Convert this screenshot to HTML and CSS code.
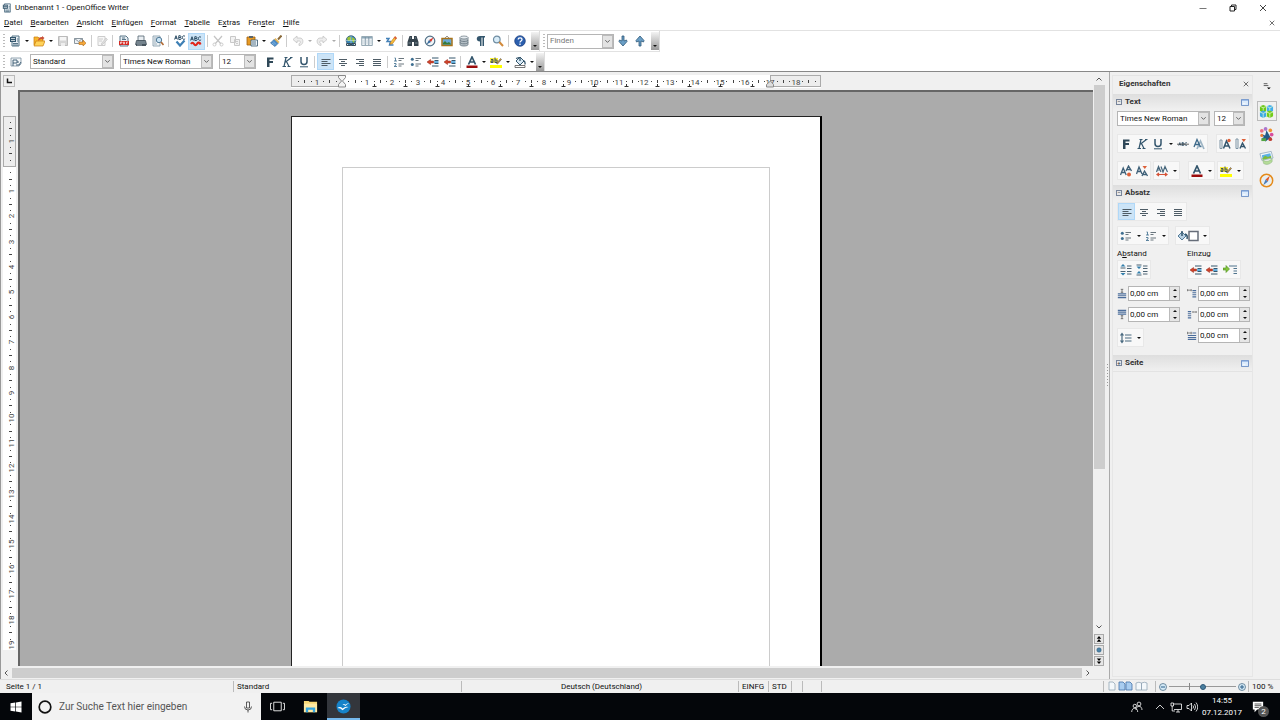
FILE: index.html
```html
<!DOCTYPE html>
<html lang="de">
<head>
  <meta charset="UTF-8" />
  <title>Unbenannt 1 - OpenOffice Writer</title>
  <link rel="stylesheet" href="styles.css">
</head>
<body>
  <svg class="sprite" aria-hidden="true">
    <symbol id="doc" viewBox="0 0 12 12"><path d="M3 1h7v10H3z" fill="#e9f0f5" stroke="#557487"/><path d="M1 2h6v5H1z" fill="#34566d"/><path d="M2 3.500h4M2 5.500h4" stroke="#fff" stroke-width=".7"/><path d="M4 8.500h5M4 10h5M8 4h1.500M8 6h1.500" stroke="#34566d" stroke-width=".8"/></symbol>
    <symbol id="open" viewBox="0 0 12 12"><path d="M1 10V2h4l1 1h4v3" fill="#f7b52d" stroke="#c97b0b" stroke-width=".7"/><path d="M1 11l2-5h9l-2 5z" fill="#ffd35a" stroke="#c97b0b" stroke-width=".7"/><path d="M5 6c0-3 2-4 4-4V1l2.500 2L9 5V4C7 4 6 5 5 6z" fill="#c8503a"/></symbol>
    <symbol id="save" viewBox="0 0 12 12"><path d="M1.500 1.500h9v9h-9z" fill="#d5d5d5" stroke="#bbb"/><path d="M3 2h6v3.500H3z" fill="#f6f6f6"/><path d="M4 8h4v3H4z" fill="#eee"/></symbol>
    <symbol id="mail" viewBox="0 0 12 12"><path d="M.5 3.500h8v5h-8z" fill="#eef2f5" stroke="#8a969f"/><path d="M.5 3.500l4 3 4-3" fill="none" stroke="#8a969f"/><path d="M5 7h4V5l3 3.200L9 11V9.500H5z" fill="#f6a93b" stroke="#b06a15" stroke-width=".6"/></symbol>
    <symbol id="edit" viewBox="0 0 12 12"><path d="M2 1.500h7v9H2z" fill="#f7f7f7" stroke="#ccc"/><path d="M3 4h4M3 6h3" stroke="#ccc"/><path d="M5 9l5-6 1.500 1.500L6 10z" fill="#ddd" stroke="#bbb" stroke-width=".5"/></symbol>
    <symbol id="pdf" viewBox="0 0 12 12"><path d="M2 1h6l2 2v8H2z" fill="#e7eef3" stroke="#5b7688"/><path d="M1 6h10v4H1z" fill="#d52a24"/><path d="M2.500 9V7h1.500v1h-1.500M5.500 7v2h1V7zM8.500 9V7H10M8.500 8h1" fill="none" stroke="#fff" stroke-width=".6"/><path d="M4 3h3M4 4.500h4" stroke="#34566d" stroke-width=".8"/></symbol>
    <symbol id="print" viewBox="0 0 12 12"><path d="M3 1h6v5H3z" fill="#e8edf1" stroke="#51636f" stroke-width=".8"/><path d="M1.500 5.500h9l1 4H.5z" fill="#75848e" stroke="#34424c" stroke-width=".7"/><path d="M1 9h10v2H1z" fill="#46545e"/><path d="M2 10h5" stroke="#d9e3ea" stroke-width=".6"/></symbol>
    <symbol id="preview" viewBox="0 0 12 12"><path d="M1 1h7v10H1z" fill="#eef3f6" stroke="#7c94a4" stroke-width=".8"/><path d="M2 3h3M2 5h2M2 7h2M2 9h3" stroke="#7c94a4" stroke-width=".7"/><circle cx="7" cy="5" r="2.700" fill="#c9e4f5" stroke="#537b98"/><path d="M9 7l2.500 3" stroke="#b06a35" stroke-width="1.600"/></symbol>
    <symbol id="letters" viewBox="0 0 12 5"><path d="M.6 4.500L2 .7l1.400 3.800M1 3.200h2M4.800.700v3.800h1.400c1.500 0 1.400-2 0-2H4.800h1.200c1.300 0 1.300-1.800 0-1.800zM11 1.300c-1.300-1.200-2.600-.3-2.600 1.200 0 1.800 1.500 2.500 2.700 1.300" fill="none" stroke="#2d4e66" stroke-width="1"/></symbol>
    <symbol id="spell" viewBox="0 0 12 12"><use href="#letters" x="0" y="0" width="12" height="5"/><path d="M2.500 6.500L6 10.500 10.500 5.500" fill="none" stroke="#3d7fb4" stroke-width="2.200"/></symbol>
    <symbol id="autospell" viewBox="0 0 12 12"><use href="#letters" x="0" y="1" width="12" height="5"/><path d="M1 9q1.500-2.500 3 0t3 0 3-.5l1-.5" fill="none" stroke="#e1261c" stroke-width="2.200"/></symbol>
    <symbol id="cut" viewBox="0 0 12 12"><path d="M2 1l7 8M10 1L3 9" stroke="#c4c4c4" stroke-width="1.200"/><circle cx="2.500" cy="9.500" r="1.500" fill="none" stroke="#ccc"/><circle cx="9.500" cy="9.500" r="1.500" fill="none" stroke="#ccc"/></symbol>
    <symbol id="copy" viewBox="0 0 12 12"><path d="M1.500 1.500h5v6h-5zM5.500 4.500h5v6h-5z" fill="#f2f2f2" stroke="#c8c8c8"/><path d="M7 6.500h2M7 8.500h2" stroke="#ccc"/></symbol>
    <symbol id="paste" viewBox="0 0 12 12"><path d="M1 2h8v8H1z" fill="#e79a24" stroke="#a15f0c" stroke-width=".8"/><path d="M3 1h4v2H3z" fill="#59646c"/><path d="M5 5h6.500v6H5z" fill="#eef5fa" stroke="#34566d" stroke-width=".8"/><path d="M6 7h4M6 9h4" stroke="#34566d" stroke-width=".8"/></symbol>
    <symbol id="brush" viewBox="0 0 12 12"><path d="M11.500.500L8 4.500" stroke="#8a6a3a" stroke-width="2"/><path d="M5.500 3L9.500 7 8 8.500 4 4.500z" fill="#e7b75a"/><path d="M4 4.500L8 8.500 5 11.500.500 8z" fill="#4a8bc9" stroke="#28608f" stroke-width=".6"/><path d="M2 8l2.500 2M3 6.500L6 9.500" stroke="#aad0ee" stroke-width=".6"/></symbol>
    <symbol id="undo" viewBox="0 0 12 12"><path d="M1 4.500L5 1v2h3c4 0 4 7-1 7.500V8.500c2-.5 2-2.500 0-2.500H5v2z" fill="#ededed" stroke="#c4c4c4" stroke-width=".8"/></symbol>
    <symbol id="globe" viewBox="0 0 12 12"><circle cx="6" cy="5.500" r="4.800" fill="#3b86b5" stroke="#28526d" stroke-width=".7"/><path d="M2 3q3-3 4 0T3 6zM7 2l3 2-1 4-2-2z" fill="#9bc33b"/><path d="M1 5.500h10M6 1v9" stroke="#d9edf5" stroke-width=".5"/><path d="M1.500 8.500h4v2h-4zM6.500 8.500h4v2h-4z" fill="none" stroke="#364b59" stroke-width="1"/></symbol>
    <symbol id="table" viewBox="0 0 12 12"><path d="M.7 1.500h10.600v9H.7z" fill="#edf2f5" stroke="#7f95a3" stroke-width=".8"/><path d="M1 2h10v1.500H1z" fill="#8fa9b9"/><path d="M4.300 2v8M7.800 2v8" stroke="#7890a0" stroke-width=".9"/><path d="M1 6h10M1 8h10" stroke="#b9c7d0" stroke-width=".6"/></symbol>
    <symbol id="draw" viewBox="0 0 12 12"><path d="M1 3.500h3l-2 3h3.500l-1 3.500h4" fill="none" stroke="#4381b8" stroke-width="1.400"/><path d="M5.500 7.500L10 1.500l1.700 1.500L7.500 8.700l-2.500.5z" fill="#f6bd3c" stroke="#b76d16" stroke-width=".6"/><path d="M10 1.500l1.700 1.500-.9 1.200L9 2.700z" fill="#de5143"/></symbol>
    <symbol id="find" viewBox="0 0 12 12"><path d="M2.500 1h2.500v3h2V1h2.500l2 6v4H7V7H5v4H.5V7z" fill="#36444e"/><path d="M1.500 8h2.500M8 8h2.500M3 3h1M8 3h1" stroke="#98a9b5" stroke-width=".7"/></symbol>
    <symbol id="compass" viewBox="0 0 12 12"><circle cx="6" cy="6" r="4.800" fill="#f1f6f9" stroke="#527087" stroke-width="1.200"/><path d="M9.500 2.500L7 7 5 5z" fill="#da3226"/><path d="M2.500 9.500L5 5l2 2z" fill="#35699c"/></symbol>
    <symbol id="gallery" viewBox="0 0 12 12"><path d="M4 3l2-2 2 2" fill="none" stroke="#666" stroke-width=".7"/><path d="M1 3.500h10v7H1z" fill="#68a9d8" stroke="#a8741c" stroke-width="1.500"/><path d="M2 9.500V8l2-2 2 2 2-1 2 2v.500z" fill="#387b38"/></symbol>
    <symbol id="database" viewBox="0 0 12 12"><path d="M2 2.500v7c0 2 8 2 8 0v-7" fill="#b4bec5" stroke="#65747e" stroke-width=".8"/><ellipse cx="6" cy="2.500" rx="4" ry="1.500" fill="#e6ecf0" stroke="#65747e" stroke-width=".7"/><path d="M2 5c0 2 8 2 8 0M2 7.300c0 2 8 2 8 0" fill="none" stroke="#65747e" stroke-width=".8"/></symbol>
    <symbol id="pilcrow" viewBox="0 0 12 12"><path d="M10 1H5C.700 1 .700 6.500 5 6.500V11h1.500V2.500h1V11H9V2.500h1z" fill="#34566d"/></symbol>
    <symbol id="loupe" viewBox="0 0 12 12"><circle cx="4.800" cy="4.500" r="3.300" fill="#d8ecf8" stroke="#6f8da2" stroke-width="1.200"/><path d="M7.300 7l3.700 4" stroke="#d28a3b" stroke-width="2"/></symbol>
    <symbol id="help" viewBox="0 0 12 12"><circle cx="6" cy="6" r="5.300" fill="#2b5fae" stroke="#18397a" stroke-width=".7"/><path d="M4.200 4.600c0-2.400 3.800-2.400 3.800 0C8 6 6 6 6 7.500M6 8.500V10" fill="none" stroke="#fff" stroke-width="1.300"/></symbol>
    <symbol id="down" viewBox="0 0 12 12"><path d="M5 1h2v5l2.500-1 .5 1.500-4 4.500-4-4.500.500-1.500L5 6z" fill="#6b9fc6" stroke="#2d5878" stroke-width=".8"/></symbol>
    <symbol id="styles" viewBox="0 0 12 12"><path d="M1 2h10v6l-2 2H1z" fill="#f3f6f8" stroke="#7890a0" stroke-width=".8"/><path d="M3 7V4h4v3H3v3M7 6h2M6 9h3l2-3" fill="none" stroke="#34566d" stroke-width=".9"/></symbol>
    <symbol id="bold" viewBox="0 0 12 12"><path d="M3 1.500h6.500v2h-4v1.500H9v2H5.500V11H3z" fill="#2f4858"/></symbol>
    <symbol id="italic" viewBox="0 0 12 12"><path d="M5 1.500L3 10.500M1.500 10.500h3.500M3.500 1.500h3M10.500 1.500L4.500 6M9 1.500h2.500M5.500 5.500L8 10.500M6.500 10.500h3" fill="none" stroke="#34566d" stroke-width="1.200"/></symbol>
    <symbol id="underline" viewBox="0 0 12 12"><path d="M3 1v4.500c0 4 6 4 6 0V1" fill="none" stroke="#34566d" stroke-width="1.500"/><path d="M2 10.800h8" stroke="#34566d"/></symbol>
    <symbol id="strike" viewBox="0 0 12 12"><use href="#letters" x="1" y="4" width="10" height="4"/><path d="M0 6.200h12" stroke="#444" stroke-width=".8"/></symbol>
    <symbol id="shadow" viewBox="0 0 12 12"><path d="M4 11l3.500-8L11 11M5 8.500h4" fill="none" stroke="#9db4c4" stroke-width="1.700"/><path d="M1 9l3-7.500L7.500 9M2 6.500h4" fill="none" stroke="#3e6a8a" stroke-width="1.300"/></symbol>
    <symbol id="left" viewBox="0 0 12 12"><path d="M1.500 3.500h9M1.500 5.500h6M1.500 7.500h9M1.500 9.500h6" stroke="#4e5c66"/></symbol>
    <symbol id="center" viewBox="0 0 12 12"><path d="M2 3.500h8M4 5.500h4M2 7.500h8M4 9.500h4" stroke="#4e5c66"/></symbol>
    <symbol id="right" viewBox="0 0 12 12"><path d="M2 3.500h8M5 5.500h5M2 7.500h8M5 9.500h5" stroke="#4e5c66"/></symbol>
    <symbol id="justify" viewBox="0 0 12 12"><path d="M2 3.500h8M2 5.500h8M2 7.500h8M2 9.500h8" stroke="#4e5c66"/></symbol>
    <symbol id="numbers" viewBox="0 0 12 12"><path d="M1.500 2h1v3M1 5h3M1 7.500h2v1.500L1 10.500h3" fill="none" stroke="#4d7896" stroke-width=".9"/><path d="M5.500 2.500h5.500M5.500 4.500h3M5.500 8h5.500M5.500 10h3" stroke="#59666f" stroke-width=".9"/></symbol>
    <symbol id="bullets" viewBox="0 0 12 12"><circle cx="2.300" cy="3.200" r="1.500" fill="#3f6f91"/><circle cx="2.300" cy="8.500" r="1.500" fill="#3f6f91"/><path d="M5.500 2.500h5.500M5.500 4.500h3M5.500 8h5.500M5.500 10h3" stroke="#59666f" stroke-width=".9"/></symbol>
    <symbol id="outdent" viewBox="0 0 12 12"><path d="M5 2h6.500M7.500 4.500h4M7.500 7.500h4M5 10h6.500" stroke="#34566d"/><path d="M7 5.200h4.500v1.700H7z" fill="#4fa3d8"/><path d="M0 6l3.500-2.500v1.500h3v2h-3v1.500z" fill="#d0432b" stroke="#942616" stroke-width=".5"/></symbol>
    <symbol id="fontcolor" viewBox="0 0 12 12"><path d="M2.500 8.500L6 1l3.500 7.500M4 6h4" fill="none" stroke="#34566d" stroke-width="1.700"/><path d="M.5 9.500h11V12H.5z" fill="#9b0d0d"/></symbol>
    <symbol id="highlight" viewBox="0 0 12 12"><path d="M0 9h12v3H0z" fill="#ff0"/><path d="M0 2h8v5H0z" fill="#f9ee3d"/><path d="M1 3.500h2v3H1V5h2M5 1.500V6.500h2V4H5" fill="none" stroke="#46545c" stroke-width="1"/><path d="M6.500 7.500l4-5 1 .9-4 4.600z" fill="#d39b37" stroke="#555" stroke-width=".6"/></symbol>
    <symbol id="fill" viewBox="0 0 12 12"><path d="M2 5l4-4 4 4-4 4z" fill="#d6e8f4" stroke="#34566d"/><path d="M6 1v4M2 2.500l3-1M9.500 4.500q2 1 1.500 4" fill="none" stroke="#34566d" stroke-width="1.300"/><path d="M1 9.500h10v2H1z" fill="#fff" stroke="#555" stroke-width=".8"/></symbol>
    <symbol id="grow" viewBox="0 0 12 12"><path d="M.5 10l2.700-7 3 7M1.500 7.500h3.500M6 6l2.500-5L11.500 6M7 4.500h3.500" fill="none" stroke="#3e6078" stroke-width="1.300"/><circle cx="9" cy="9.500" r="2" fill="#dc6039"/></symbol>
    <symbol id="shrink" viewBox="0 0 12 12"><path d="M.5 9L3 2l3 7M1.500 6.500h3.500M6 11l2.500-5 3 5M7 9.500h3.500" fill="none" stroke="#3e6078" stroke-width="1.300"/><path d="M6.500 1H11L8.800 4z" fill="#dc6039"/></symbol>
    <symbol id="sizeup" viewBox="0 0 12 12"><path d="M1 2v8.500h2V2z" fill="none" stroke="#7c93a3"/><path d="M4.500 10.500L7.500 3l3.500 7.500M5.500 8h4" fill="none" stroke="#34566d" stroke-width="1.500"/><circle cx="10" cy="2.500" r="1.700" fill="#dc6039"/></symbol>
    <symbol id="sizedown" viewBox="0 0 12 12"><path d="M1 1v9.500h2V1z" fill="none" stroke="#7c93a3"/><path d="M5 10.500L7.500 5l3 5.500M6 8.500h3" fill="none" stroke="#34566d" stroke-width="1.400"/><path d="M6.500 1h4.500L8.800 4z" fill="#dc6039"/></symbol>
    <symbol id="spacing" viewBox="0 0 12 12"><path d="M.5 7L2.500 1.500 5 7M1.500 5h2.500M5 1.500L7 7l2-5.500L11.500 7" fill="none" stroke="#46667b" stroke-width="1.200"/><path d="M1 9.500h10M3 8l-2 1.500L3 11M9 8l2 1.500L9 11" fill="none" stroke="#d65338" stroke-width="1.200"/></symbol>
    <symbol id="bucket" viewBox="0 0 22 12"><path d="M1 6l4-4 4 4-4 4z" fill="#b7d0e3" stroke="#537b98"/><path d="M5 1v5M8 4q3 1 2 5" fill="none" stroke="#34566d" stroke-width="1.500"/><path d="M12 1.500h9v9h-9z" fill="#fff" stroke="#666d79" stroke-width="1.500"/></symbol>
    <symbol id="paraup" viewBox="0 0 12 12"><path d="M3 0l2.500 2.500h-5zM3 11.500L.5 9h5z" fill="#3480ad"/><path d="M.5 4h5M.5 7.500h5M7 2h4.500M7 4.500h4.500M7 7.500h4.500M7 10h4.500" stroke="#4c6373" stroke-width="1.200"/></symbol>
    <symbol id="paradown" viewBox="0 0 12 12"><path d="M3 5L.5 2.500h5zM3 7l2.500 2.500h-5z" fill="#3480ad"/><path d="M.5 1h5M.5 11h5M7 2h4.500M7 4.500h4.500M7 7.500h4.500M7 10h4.500" stroke="#4c6373" stroke-width="1.200"/></symbol>
    <symbol id="hanging" viewBox="0 0 14 12"><path d="M0 4h3V1.500L6.500 5 3 8.500V6H0z" fill="#83c43c" stroke="#4c8f1d" stroke-width=".6"/><path d="M6 2h8M10.500 4.500H14M10.500 7H14M10.500 9.500H14" stroke="#50748d" stroke-width="1.200"/></symbol>
    <symbol id="above" viewBox="0 0 12 12"><path d="M1 6.500h10M1 8.700h10M1 11h10" stroke="#4b6d9b" stroke-width="1.400"/><path d="M6 1v4M4.500 1h3M4.500 4.500h3" stroke="#555" stroke-width=".9"/></symbol>
    <symbol id="below" viewBox="0 0 12 12"><path d="M1 1h10M1 3.200h10M1 5.500h10" stroke="#4b6d9b" stroke-width="1.400"/><path d="M6 7v4M4.500 7.500h3M4.500 11h3" stroke="#555" stroke-width=".9"/></symbol>
    <symbol id="before" viewBox="0 0 12 12"><path d="M6.500 2.500H11M6.500 5H11M6.500 7.500H11M6.500 10H11" stroke="#4b6d9b" stroke-width="1.300"/><path d="M.5 2h5M.7.800v2.500M5 .800v2.500" stroke="#555" stroke-width=".8"/></symbol>
    <symbol id="after" viewBox="0 0 12 12"><path d="M1 2.500h4M1 5h4M1 7.500h4M1 10h4" stroke="#4b6d9b" stroke-width="1.300"/><path d="M7 3h4.500M7 2v2M11 2v2" stroke="#555" stroke-width=".8"/></symbol>
    <symbol id="firstline" viewBox="0 0 12 12"><path d="M6.500 3H11M1 6h10M1 8.300h10M1 10.600h10" stroke="#4b6d9b" stroke-width="1.300"/><path d="M.5 3h5M.7 1.500v3M5 1.500v3" stroke="#555" stroke-width=".8"/></symbol>
    <symbol id="linespace" viewBox="0 0 12 12"><path d="M2 2v8M.5 3.500L2 1.500l1.500 2M.5 8.500l1.500 2 1.500-2M5 3h6.500M5 6h6.500M5 9h6.500" fill="none" stroke="#4a6a80" stroke-width="1.200"/></symbol>
    <symbol id="more" viewBox="0 0 9 8"><path d="M.5.500h8v7h-8z" fill="#dcebfb" stroke="#6488c2"/><path d="M1 1.500h7" stroke="#8aaee2"/><path d="M2 5.500h3" stroke="#fff"/></symbol>
    <symbol id="chevron" viewBox="0 0 8 8"><path d="M1.500 2.500L4 5l2.500-2.500" fill="none" stroke="#555"/></symbol>
    <symbol id="close" viewBox="0 0 8 8"><path d="M1 1l6 6M7 1L1 7" stroke="#444" stroke-width="1"/></symbol>
    <symbol id="cubes" viewBox="0 0 16 16"><path d="M8 2.500l3.500-1.500L15 2.500v5L11.500 9 8 7.500z" fill="#42aee9"/><path d="M1 2.500L4.500 1 8 2.500v5L4.500 9 1 7.500z" fill="#6bc817"/><path d="M1 8.500L4.500 7 8 8.500v4.500l-3.500 2L1 13z" fill="#3ba9e4"/><path d="M8 8.500L11.500 7 15 8.500V13l-3.500 2L8 13z" fill="#72cb19"/><path d="M1 2.500L4.500 4 8 2.500 11.500 4 15 2.500M1 8.500L4.500 10 8 8.500l3.500 1.500L15 8.500M4.500 4v3M11.500 4v3M4.500 10v5M11.500 10v5M8 2.500V13" fill="none" stroke="#e1f7d5" stroke-width=".8"/></symbol>
    <symbol id="gallerytab" viewBox="0 0 16 16"><circle cx="3" cy="4" r="2" fill="#ea6f87"/><circle cx="7" cy="2" r="2" fill="#ac76cc"/><circle cx="12" cy="3.500" r="2" fill="#f09431"/><circle cx="13.500" cy="8" r="2" fill="#d84d9d"/><circle cx="3" cy="9" r="1.700" fill="#ed7f33"/><path d="M8 3.500l6 10.500-4-1-3 2.500L3 12l2-1-1-3 2.500 1z" fill="#235a86"/><circle cx="12" cy="13" r="2" fill="#bf3d31"/><path d="M2.500 12h5v3h-5z" fill="#53a443"/></symbol>
    <symbol id="layers" viewBox="0 0 16 16"><path d="M1 4l12-2.500 2 7L3 11z" fill="#f2f7fb" stroke="#8ba6b9" stroke-width=".8"/><path d="M3 5.500l9-2 1 4.500-9 2z" fill="#5ab0e5"/><path d="M3.500 9l3-3 3 1.500 3.500-1.500v2.500l-9 2z" fill="#7dbb3b"/><path d="M4 11q6 3 10-2v3.500q-4 4.500-9 2z" fill="#b5dc97" stroke="#8fb684" stroke-width=".6"/></symbol>
    <symbol id="navtab" viewBox="0 0 16 16"><circle cx="8" cy="8" r="6.600" fill="#f6f1e3" stroke="#e38a1c" stroke-width="1.600"/><circle cx="8" cy="8" r="4.800" fill="#e2edf6"/><path d="M11.500 3L9.500 9 7 7z" fill="#e05a2b"/><path d="M4.500 13l2.500-6 2.500 2z" fill="#4a7db6"/></symbol>
    <symbol id="person" viewBox="0 0 12 12"><circle cx="8" cy="3" r="1.900"/><path d="M5 9c0-5 6-5 6 0"/><circle cx="3.800" cy="5" r="1.700"/><path d="M.7 11c0-5 6-5 6 0"/></symbol>
  </svg>

  <div class="app">
    <header class="titlebar">
      <svg class="icon"><use href="#doc"/></svg>
      <h1>Unbenannt 1 - OpenOffice Writer</h1>
      <button class="win" aria-label="Minimieren"><svg viewBox="0 0 8 8"><path d="M.5 4.500h7" stroke="#777"/></svg></button>
      <button class="win" aria-label="Verkleinern"><svg viewBox="0 0 8 8"><path d="M1 2.500h4.500V7H1zM2.500 2.500V1h4.500v4.500H5.500" fill="none" stroke="#222"/></svg></button>
      <button class="win" aria-label="Schließen"><svg><use href="#close"/></svg></button>
    </header>

    <nav class="menubar">
      <button><u>D</u>atei</button>
      <button><u>B</u>earbeiten</button>
      <button><u>A</u>nsicht</button>
      <button><u>E</u>infügen</button>
      <button><u>F</u>ormat</button>
      <button><u>T</u>abelle</button>
      <button>E<u>x</u>tras</button>
      <button>Fen<u>s</u>ter</button>
      <button><u>H</u>ilfe</button>
      <button class="doc-close" aria-label="Dokument schließen"><svg><use href="#close"/></svg></button>
    </nav>

    <div class="toolrow">
      <div class="toolbar standard">
        <i class="grip"></i>
        <button class="tool" aria-label="Neu"><svg><use href="#doc"/></svg></button><button class="arrow" aria-label="Neu Auswahl"></button>
        <button class="tool" aria-label="Öffnen"><svg><use href="#open"/></svg></button><button class="arrow" aria-label="Zuletzt benutzt"></button>
        <button class="tool" aria-label="Speichern"><svg><use href="#save"/></svg></button>
        <button class="tool" aria-label="E-Mail"><svg><use href="#mail"/></svg></button>
        <i class="sep"></i>
        <button class="tool" aria-label="Bearbeiten"><svg><use href="#edit"/></svg></button>
        <i class="sep"></i>
        <button class="tool" aria-label="PDF"><svg><use href="#pdf"/></svg></button>
        <button class="tool" aria-label="Drucken"><svg><use href="#print"/></svg></button>
        <button class="tool" aria-label="Seitenansicht"><svg><use href="#preview"/></svg></button>
        <i class="sep"></i>
        <button class="tool" aria-label="Rechtschreibung"><svg><use href="#spell"/></svg></button>
        <button class="tool on" aria-label="Automatische Prüfung"><svg><use href="#autospell"/></svg></button>
        <i class="sep"></i>
        <button class="tool" aria-label="Ausschneiden"><svg><use href="#cut"/></svg></button>
        <button class="tool" aria-label="Kopieren"><svg><use href="#copy"/></svg></button>
        <button class="tool" aria-label="Einfügen"><svg><use href="#paste"/></svg></button><button class="arrow" aria-label="Einfügen als"></button>
        <button class="tool" aria-label="Format übertragen"><svg><use href="#brush"/></svg></button>
        <i class="sep"></i>
        <button class="tool" aria-label="Rückgängig"><svg><use href="#undo"/></svg></button><button class="arrow off" aria-label="Rückgängig Liste"></button>
        <button class="tool flip" aria-label="Wiederherstellen"><svg><use href="#undo"/></svg></button><button class="arrow off" aria-label="Wiederherstellen Liste"></button>
        <i class="sep"></i>
        <button class="tool" aria-label="Hyperlink"><svg><use href="#globe"/></svg></button>
        <button class="tool" aria-label="Tabelle"><svg><use href="#table"/></svg></button><button class="arrow" aria-label="Tabellengröße"></button>
        <button class="tool" aria-label="Zeichnen"><svg><use href="#draw"/></svg></button>
        <i class="sep"></i>
        <button class="tool" aria-label="Suchen"><svg><use href="#find"/></svg></button>
        <button class="tool" aria-label="Navigator"><svg><use href="#compass"/></svg></button>
        <button class="tool" aria-label="Gallery"><svg><use href="#gallery"/></svg></button>
        <button class="tool" aria-label="Datenquellen"><svg><use href="#database"/></svg></button>
        <button class="tool" aria-label="Steuerzeichen"><svg><use href="#pilcrow"/></svg></button>
        <button class="tool" aria-label="Maßstab"><svg><use href="#loupe"/></svg></button>
        <i class="sep"></i>
        <button class="tool" aria-label="Hilfe"><svg><use href="#help"/></svg></button>
        <button class="end" aria-label="Weitere"></button>
      </div>
      <div class="toolbar search">
        <i class="grip"></i>
        <span class="combo find"><input type="text" placeholder="Finden" aria-label="Finden"><svg><use href="#chevron"/></svg></span>
        <button class="tool" aria-label="Weitersuchen"><svg><use href="#down"/></svg></button>
        <button class="tool flip-y" aria-label="Rückwärts suchen"><svg><use href="#down"/></svg></button>
        <button class="end" aria-label="Weitere"></button>
      </div>
    </div>

    <div class="toolrow">
      <div class="toolbar format">
        <i class="grip"></i>
        <button class="tool" aria-label="Formatvorlagen"><svg><use href="#styles"/></svg></button>
        <span class="combo style"><select aria-label="Vorlage"><option>Standard</option></select><svg><use href="#chevron"/></svg></span>
        <span class="combo font"><select aria-label="Schriftart"><option>Times New Roman</option></select><svg><use href="#chevron"/></svg></span>
        <span class="combo size"><select aria-label="Schriftgröße"><option>12</option></select><svg><use href="#chevron"/></svg></span>
        <button class="tool" aria-label="Fett"><svg><use href="#bold"/></svg></button>
        <button class="tool" aria-label="Kursiv"><svg><use href="#italic"/></svg></button>
        <button class="tool" aria-label="Unterstrichen"><svg><use href="#underline"/></svg></button>
        <i class="sep"></i>
        <button class="tool on" aria-label="Linksbündig"><svg><use href="#left"/></svg></button>
        <button class="tool" aria-label="Zentriert"><svg><use href="#center"/></svg></button>
        <button class="tool" aria-label="Rechtsbündig"><svg><use href="#right"/></svg></button>
        <button class="tool" aria-label="Blocksatz"><svg><use href="#justify"/></svg></button>
        <i class="sep"></i>
        <button class="tool" aria-label="Nummerierung"><svg><use href="#numbers"/></svg></button>
        <button class="tool" aria-label="Aufzählung"><svg><use href="#bullets"/></svg></button>
        <button class="tool" aria-label="Einzug verringern"><svg><use href="#outdent"/></svg></button>
        <button class="tool" aria-label="Einzug erhöhen"><svg><use href="#outdent"/></svg></button>
        <i class="sep"></i>
        <button class="tool" aria-label="Schriftfarbe"><svg><use href="#fontcolor"/></svg></button><button class="arrow" aria-label="Schriftfarbe wählen"></button>
        <button class="tool" aria-label="Hervorheben"><svg><use href="#highlight"/></svg></button><button class="arrow" aria-label="Hervorhebung wählen"></button>
        <button class="tool" aria-label="Hintergrund"><svg><use href="#fill"/></svg></button><button class="arrow" aria-label="Hintergrund wählen"></button>
        <button class="end" aria-label="Weitere"></button>
      </div>
    </div>

    <main class="work">
      <section class="editor">
        <div class="hruler">
          <button class="tabstop" aria-label="Tabulator"><svg viewBox="0 0 10 10"><path d="M3.500 2.500v4H8" fill="none" stroke="#111" stroke-width="1.500"/></svg></button>
          <div class="htrack"><svg id="hscale" width="530" height="14"></svg></div>
        </div>
        <div class="vruler"><svg id="vscale" width="13" height="534"></svg></div>
        <div class="canvas">
          <div class="page"><div class="textarea" contenteditable="true" spellcheck="false" aria-label="Text"></div></div>
        </div>
        <div class="vscroll">
          <svg><use href="#chevron" transform="rotate(180 4 4)"/></svg>
          <div class="vthumb"></div>
          <svg class="push"><use href="#chevron"/></svg>
          <button aria-label="Vorherige Seite"><svg viewBox="0 0 8 8"><path d="M4 0l3 3.500H1zM4 4l3 3.500H1z"/></svg></button>
          <button aria-label="Navigation"><svg viewBox="0 0 8 8"><circle cx="4" cy="4" r="3" fill="#4b82a6" stroke="#2d5878" stroke-width=".6"/></svg></button>
          <button aria-label="Nächste Seite"><svg viewBox="0 0 8 8"><path d="M4 4L1 .5h6zM4 8L1 4.500h6z"/></svg></button>
        </div>
        <div class="hscroll">
          <svg><use href="#chevron" transform="rotate(90 4 4)"/></svg>
          <div class="hthumb"></div>
          <svg><use href="#chevron" transform="rotate(-90 4 4)"/></svg>
        </div>
      </section>

      <div class="splitter"></div>

      <aside class="sidebar">
        <div class="deck">
          <div class="deck-title"><h2>Eigenschaften</h2><button aria-label="Seitenleiste schließen"><svg><use href="#close"/></svg></button></div>

          <div class="head"><span class="box">−</span><h3>Text</h3><button aria-label="Zeichen"><svg><use href="#more"/></svg></button></div>
          <div class="panel text-panel">
            <div class="row fonts">
              <span class="combo font"><select aria-label="Schriftart"><option>Times New Roman</option></select><svg><use href="#chevron"/></svg></span>
              <span class="combo size"><select aria-label="Schriftgröße"><option>12</option></select><svg><use href="#chevron"/></svg></span>
            </div>
            <div class="row apart">
              <div class="group">
                <button class="tool" aria-label="Fett"><svg><use href="#bold"/></svg></button>
                <button class="tool" aria-label="Kursiv"><svg><use href="#italic"/></svg></button>
                <button class="tool" aria-label="Unterstrichen"><svg><use href="#underline"/></svg></button><button class="arrow" aria-label="Unterstreichung"></button>
                <button class="tool" aria-label="Durchgestrichen"><svg><use href="#strike"/></svg></button>
                <button class="tool" aria-label="Schatten"><svg><use href="#shadow"/></svg></button>
              </div>
              <div class="group">
                <button class="tool" aria-label="Vergrößern"><svg><use href="#sizeup"/></svg></button>
                <button class="tool" aria-label="Verkleinern"><svg><use href="#sizedown"/></svg></button>
              </div>
            </div>
            <div class="row marks">
              <div class="group">
                <button class="tool" aria-label="Hochgestellt"><svg><use href="#grow"/></svg></button>
                <button class="tool" aria-label="Tiefgestellt"><svg><use href="#shrink"/></svg></button>
              </div>
              <div class="group">
                <button class="tool" aria-label="Zeichenabstand"><svg><use href="#spacing"/></svg></button><button class="arrow" aria-label="Abstand wählen"></button>
              </div>
              <div class="group color">
                <button class="tool" aria-label="Schriftfarbe"><svg><use href="#fontcolor"/></svg></button><button class="arrow" aria-label="Farbe wählen"></button>
              </div>
              <div class="group">
                <button class="tool" aria-label="Hervorheben"><svg><use href="#highlight"/></svg></button><button class="arrow" aria-label="Hervorhebung wählen"></button>
              </div>
            </div>
          </div>

          <div class="head"><span class="box">−</span><h3>Absatz</h3><button aria-label="Absatz"><svg><use href="#more"/></svg></button></div>
          <div class="panel para-panel">
            <div class="row">
              <div class="group align">
                <button class="tool on" aria-label="Linksbündig"><svg><use href="#left"/></svg></button>
                <button class="tool" aria-label="Zentriert"><svg><use href="#center"/></svg></button>
                <button class="tool" aria-label="Rechtsbündig"><svg><use href="#right"/></svg></button>
                <button class="tool" aria-label="Blocksatz"><svg><use href="#justify"/></svg></button>
              </div>
            </div>
            <div class="row lists">
              <div class="group">
                <button class="tool" aria-label="Aufzählung"><svg><use href="#bullets"/></svg></button><button class="arrow" aria-label="Zeichen wählen"></button>
                <button class="tool" aria-label="Nummerierung"><svg><use href="#numbers"/></svg></button><button class="arrow" aria-label="Nummern wählen"></button>
              </div>
              <div class="group">
                <button class="tool wide" aria-label="Absatzhintergrund"><svg><use href="#bucket"/></svg></button><button class="arrow" aria-label="Farbe wählen"></button>
              </div>
            </div>
            <div class="columns">
              <div>
                <h4>A<u>b</u>stand</h4>
                <div class="group">
                  <button class="tool" aria-label="Abstand erhöhen"><svg><use href="#paraup"/></svg></button>
                  <button class="tool" aria-label="Abstand verringern"><svg><use href="#paradown"/></svg></button>
                </div>
                <label class="measure"><svg><use href="#above"/></svg><span class="spin"><input type="text" value="0,00 cm" aria-label="Über Absatz"><i></i></span></label>
                <label class="measure"><svg><use href="#below"/></svg><span class="spin"><input type="text" value="0,00 cm" aria-label="Unter Absatz"><i></i></span></label>
                <div class="group">
                  <button class="tool" aria-label="Zeilenabstand"><svg><use href="#linespace"/></svg></button><button class="arrow" aria-label="Zeilenabstand wählen"></button>
                </div>
              </div>
              <div>
                <h4>Einzug</h4>
                <div class="group">
                  <button class="tool" aria-label="Einzug erhöhen"><svg><use href="#outdent"/></svg></button>
                  <button class="tool" aria-label="Einzug verringern"><svg><use href="#outdent"/></svg></button>
                  <button class="tool hang" aria-label="Hängender Einzug"><svg><use href="#hanging"/></svg></button>
                </div>
                <label class="measure"><svg><use href="#before"/></svg><span class="spin"><input type="text" value="0,00 cm" aria-label="Vor Text"><i></i></span></label>
                <label class="measure"><svg><use href="#after"/></svg><span class="spin"><input type="text" value="0,00 cm" aria-label="Hinter Text"><i></i></span></label>
                <label class="measure"><svg><use href="#firstline"/></svg><span class="spin"><input type="text" value="0,00 cm" aria-label="Erste Zeile"><i></i></span></label>
              </div>
            </div>
          </div>

          <div class="head"><span class="box">+</span><h3>Seite</h3><button aria-label="Seite"><svg><use href="#more"/></svg></button></div>
          <div class="panel rest"></div>
        </div>
        <div class="tabs">
          <button aria-label="Menü"><svg viewBox="0 0 16 16"><path d="M5 5h4M5 7h5" stroke="#555"/><path d="M8.500 9h4L10.500 11z"/></svg></button>
          <button class="active" aria-label="Eigenschaften"><svg><use href="#cubes"/></svg></button>
          <button aria-label="Gallery"><svg><use href="#gallerytab"/></svg></button>
          <button aria-label="Formatvorlagen"><svg><use href="#layers"/></svg></button>
          <button aria-label="Navigator"><svg><use href="#navtab"/></svg></button>
        </div>
      </aside>
    </main>

    <footer class="statusbar">
      <span class="s-page">Seite 1 / 1</span>
      <span class="s-style">Standard</span>
      <span class="s-lang">Deutsch (Deutschland)</span>
      <span class="s-mode">EINFG</span>
      <span class="s-sel">STD</span>
      <span class="s-mod"></span>
      <span class="s-sig"></span>
      <span class="s-info"></span>
      <span class="s-view">
        <svg class="views" viewBox="0 0 42 10"><g fill="#f4f8fb" stroke="#93a6b6" stroke-width=".8"><path d="M2 1h4l2 2v6H2z"/><path d="M29 2q3-1.500 5.500 0v7H29zM34.500 2q3-1.500 5.500 0v7h-5.500z"/></g><g fill="#a9cdf0" stroke="#4472a8" stroke-width=".8"><path d="M12 1h4l2 2v6h-6zM19 1h4l2 2v6h-6z"/></g></svg>
      </span>
      <span class="s-zoom">
        <svg viewBox="0 0 8 8"><circle cx="4" cy="4" r="3.500" fill="#d3e9f7" stroke="#53738b" stroke-width=".8"/><path d="M2 4h4" stroke="#2b5c85"/></svg>
        <input type="range" min="0" max="100" value="50" aria-label="Maßstab">
        <svg viewBox="0 0 8 8"><circle cx="4" cy="4" r="3.500" fill="#d3e9f7" stroke="#53738b" stroke-width=".8"/><path d="M2 4h4M4 2v4" stroke="#2b5c85"/></svg>
      </span>
      <span class="s-percent">100 %</span>
    </footer>

    <div class="taskbar">
      <button class="start" aria-label="Start"><svg viewBox="0 0 12 12" fill="#fff"><path d="M.5 2.200L5.300 1.500v4.200H.5zM6 1.400l5.500-.8v5.100H6zM.5 6.300h4.800v4.200L.5 9.800zM6 6.300h5.500v5.100L6 10.600z"/></svg></button>
      <label class="cortana">
        <svg viewBox="0 0 14 14"><circle cx="7" cy="7" r="5.800" fill="none" stroke="#111" stroke-width="1.700"/></svg>
        <input type="text" placeholder="Zur Suche Text hier eingeben" aria-label="Suche">
        <svg class="mic" viewBox="0 0 10 12"><path d="M3.500 1h3v6h-3zM1.500 5.500q0 3.500 3.500 3.500t3.500-3.500M5 9v2.500" fill="none" stroke="#333" stroke-width=".8"/></svg>
      </label>
      <button class="task" aria-label="Taskansicht"><svg viewBox="0 0 14 14"><path d="M3.500 3h7v8h-7zM2 4H.5v6H2M12 4h1.500v6H12" fill="none" stroke="#fff" stroke-width=".8"/></svg></button>
      <button class="task" aria-label="Explorer"><svg viewBox="0 0 16 16"><path d="M1 2h5l1 1h8v11H1z" fill="#f8d775"/><path d="M1 5h14v9H1z" fill="#ffe9a2"/><path d="M3 9h10v5h-2.500v-2.500h-5V14H3z" fill="#35a5e0"/></svg></button>
      <button class="task current" aria-label="OpenOffice"><svg viewBox="0 0 16 16"><circle cx="8" cy="8" r="7.500" fill="#1683c9"/><path d="M6.500 6q2-1.500 3.500 0 2-2 4-1.500-2 .5-4 3-1.500-2-3.500-1.500zM1.500 9.500q3-2 5.500.5Q9.500 7.500 13.500 8.500q-3.500.5-6.500 3.500Q5 9.500 1.500 9.500z" fill="#fff"/></svg></button>
      <div class="tray">
        <svg class="people"><use href="#person"/></svg>
        <svg viewBox="0 0 12 12"><path d="M2 8l4-4 4 4"/></svg>
        <svg viewBox="0 0 12 12"><path d="M4 3h7.500v5.500H4M6 11h4M8 8.500V11M1 2h2.500v3H1zM2.200 5v5H5"/></svg>
        <svg viewBox="0 0 12 12"><path d="M1 4.500h2l2.500-2.500v8L3 7.500H1zM7 4.500q1.200 1.500 0 3M8.500 3q2.200 3 0 6M10 1.500q3.500 4.500 0 9"/></svg>
        <time><span>14:55</span><span>07.12.2017</span></time>
        <button class="notes" aria-label="Info-Center"><svg viewBox="0 0 14 14"><path d="M1 1h12v9H6l-3 3v-3H1z" fill="#fff"/><path d="M3 3.500h8M3 5.500h8M3 7.500h5" stroke="#111" stroke-width=".8"/></svg><b>2</b></button>
      </div>
    </div>
  </div>

  <script src="rulers.js"></script>
</body>
</html>
```

FILE: styles.css
```css
* {
  box-sizing: border-box;
}

body {
  margin: 0;
  font-family: Roboto, "Open Sans", sans-serif;
  font-size: 8px;
  line-height: 12px;
  color: #111;
}

button, input, select {
  font: inherit;
  color: inherit;
  padding: 0;
  margin: 0;
  border: 0;
  background: none;
  outline: none;
  min-width: 0;
}

h1, h2, h3, h4 {
  margin: 0;
  font-size: 8px;
  font-weight: normal;
}

u {
  text-underline-offset: 1px;
}

svg {
  display: block;
  flex: none;
}

.sprite {
  position: absolute;
  width: 0;
  height: 0;
}

.app {
  display: flex;
  flex-direction: column;
  height: 100vh;
  overflow: hidden;
  background: #fff;
}

/* title and menu */
.titlebar {
  display: flex;
  align-items: center;
  height: 16px;
  padding-left: 2px;
  padding-right: 2px;
}

.icon {
  width: 10px;
  height: 10px;
  margin-right: 3px;
}

.titlebar h1 {
  flex: 1;
}

.win {
  width: 30px;
  height: 14px;
  display: grid;
  place-items: center;
}

.win svg {
  width: 8px;
  height: 8px;
}

.menubar {
  display: flex;
  align-items: center;
  gap: 8px;
  height: 15px;
  padding: 0 5px 0 4px;
  border-bottom: 1px solid #e2e2e2;
}

.doc-close {
  margin-left: auto;
}

.doc-close svg {
  width: 6px;
  height: 6px;
}

/* toolbars */
.toolrow {
  display: flex;
  height: 21px;
}

.toolrow + .toolrow {
  height: 19px;
}

.toolbar {
  display: flex;
  align-items: center;
  border-right: 1px solid #ddd;
  border-bottom: 1px solid #e2e2e2;
}

.standard {
  width: 540px;
}

.search {
  width: 120px;
}

.format {
  width: 545px;
  border-bottom: 0;
}

.grip {
  flex: none;
  width: 2px;
  height: 14px;
  margin: 0 2px 0 3px;
  background: repeating-linear-gradient(#bbb 0 1px, #fff 1px 3px);
}

.tool {
  flex: 0 1 17px;
  height: 17px;
  display: flex;
  align-items: center;
  justify-content: center;
}

.tool svg {
  width: 12px;
  height: 12px;
}

.tool.on {
  background: #cce4f7;
  border: 1px solid #b0d8f8;
}

.flip svg {
  transform: scaleX(-1);
}

.flip-y svg {
  transform: scaleY(-1);
}

.arrow {
  flex: 0 1 7px;
  height: 16px;
  display: grid;
  place-items: center;
}

.arrow::before {
  content: "";
  border: 2px solid transparent;
  border-top-color: #111;
  border-bottom: 0;
}

.arrow.off::before {
  border-top-color: #aaa;
}

.sep {
  flex: 0 1 5px;
  height: 12px;
  background: linear-gradient(#ccc, #ccc) center / 1px 100% no-repeat;
}

.end {
  flex: none;
  width: 8px;
  height: 18px;
  margin-left: auto;
  background: linear-gradient(#f3f3f3, #999);
  display: flex;
  align-items: flex-end;
  justify-content: center;
  padding-bottom: 3px;
}

.standard .end {
  margin-left: 3px;
}

.end::before {
  content: "";
  border: 2px solid transparent;
  border-top-color: #111;
  border-bottom: 0;
}

.combo {
  flex: none;
  display: flex;
  height: 15px;
  background: #fff;
  border: 1px solid #b5b5b5;
}

.combo select,
.combo input {
  flex: 1;
  appearance: none;
  padding-left: 2px;
}

.combo svg {
  width: 11px;
  height: 13px;
  padding: 1px;
  background: #e3e3e3;
  border: 1px solid #bbb;
}

.find {
  width: 67px;
}

.find ::placeholder {
  color: #777;
}

.style {
  width: 84px;
  margin: 0 6px;
}

.font {
  width: 93px;
}

.size {
  width: 37px;
  margin: 0 5px 0 6px;
}

/* document area */
.work {
  flex: 1;
  min-height: 0;
  display: flex;
  background: #f0f0f0;
  border-top: 1px solid #888;
}

.editor {
  flex: 1;
  min-width: 0;
  display: grid;
  grid-template: 18px minmax(0, 1fr) 13px / 17px minmax(0, 1fr) 12px;
  border-left: 1px solid #999;
}

.hruler {
  grid-column: 1 / 3;
  display: flex;
  padding-top: 3px;
}

.tabstop {
  width: 12px;
  height: 12px;
  margin: 0 3px 0 2px;
  border: 1px solid #bbb;
}

.htrack {
  flex: 1;
  display: flex;
  justify-content: center;
}

.vruler {
  padding: 26px 0 0 2px;
  overflow: hidden;
}

.canvas {
  background: #ababab;
  border-top: 2px solid #666;
  border-left: 2px solid #666;
  padding-top: 24px;
  overflow: hidden;
}

.page {
  width: 531px;
  min-height: 750px;
  margin: 0 auto;
  padding: 50px;
  background: #fff;
  border: 1px solid #222;
  border-right-width: 2px;
  border-right-color: #000;
  display: flex;
}

.textarea {
  flex: 1;
  border: 1px solid #ccc;
  outline: none;
  font-family: "Liberation Serif", serif;
}

.vscroll {
  grid-row: 1 / 4;
  grid-column: 3;
  display: flex;
  flex-direction: column;
  align-items: center;
  padding: 3px 0 13px;
}

.vscroll > svg,
.hscroll > svg {
  width: 8px;
  height: 8px;
}

.vthumb {
  flex: 0 0 65%;
  width: 11px;
  margin-top: 2px;
  background: #cdcdcd;
}

.push {
  margin-top: auto;
  margin-bottom: 2px;
}

.vscroll button {
  width: 10px;
  height: 10px;
  margin-top: 1px;
  padding: 1px;
  border: 1px solid #aaa;
  background: #e6e6e6;
}

.vscroll button svg {
  width: 6px;
  height: 6px;
}

.hscroll {
  grid-row: 3;
  grid-column: 1 / 3;
  display: flex;
  align-items: center;
  gap: 2px;
  padding: 0 1px;
}

.hthumb {
  flex: 1;
  height: 10px;
  background: #cdcdcd;
}

.splitter {
  width: 4px;
  background: repeating-linear-gradient(#999 0 1px, #f0f0f0 1px 3px) center / 1px 24px no-repeat;
}

/* sidebar */
.sidebar {
  width: 171px;
  display: flex;
  padding: 3px 0 2px 2px;
  border-left: 1px solid #aaa;
}

.deck {
  width: 141px;
  display: flex;
  flex-direction: column;
  border: 1px solid #e6e6e6;
}

.deck h2, .deck h3 {
  font-weight: bold;
  color: #333;
}

.deck-title {
  display: flex;
  align-items: center;
  justify-content: space-between;
  height: 18px;
  padding: 0 3px 2px 6px;
}

.deck-title svg {
  width: 6px;
  height: 6px;
}

.head {
  display: flex;
  align-items: center;
  height: 16px;
  padding: 0 3px;
  background: linear-gradient(#dedede, #f0f0f0);
}

.head h3 {
  flex: 1;
  margin-left: 3px;
}

.head button {
  height: 12px;
}

.head button svg {
  width: 8px;
  height: 7px;
}

.box {
  width: 6px;
  height: 6px;
  font-size: 6px;
  line-height: 4px;
  text-align: center;
  border: 1px solid #77849a;
  color: #334;
}

.panel {
  padding: 0 2px 0 4px;
}

.row {
  display: flex;
}

.apart {
  justify-content: space-between;
}

.group {
  display: flex;
  width: max-content;
  height: 19px;
  align-items: center;
  background: #f8f8f8;
  border: 1px solid #e8e8e8;
}

.group .tool {
  flex: none;
  width: 16px;
}

.group .arrow {
  flex: none;
  width: 9px;
}

.group.align .tool {
  width: 17px;
}

.text-panel {
  display: grid;
  gap: 8px;
  padding-top: 1px;
  padding-bottom: 5px;
}

.fonts .size {
  width: 31px;
  margin: 0 0 0 4px;
}

.marks {
  gap: 2px;
}

.color {
  margin-left: 6px;
}

.para-panel {
  display: grid;
  gap: 5px;
  padding-top: 1px;
  padding-bottom: 6px;
}

.lists {
  gap: 6px;
}

.group .wide {
  width: 24px;
}

.wide svg {
  width: 22px;
}

.group .hang {
  width: 20px;
}

.hang svg {
  width: 14px;
}

.columns {
  display: grid;
  grid-template-columns: 70px 1fr;
}

.columns .group {
  margin-bottom: 7px;
}

h4 {
  line-height: 8px;
}

.columns h4 + .group {
  margin-top: 2px;
}

.measure {
  display: flex;
  align-items: center;
  height: 15px;
  gap: 1px;
  margin-bottom: 6px;
}

.measure > svg {
  width: 10px;
  height: 11px;
}

.columns .measure + .group {
  margin-bottom: 0;
}

.spin {
  display: flex;
  width: 52px;
  height: 15px;
  background: #fff;
  border: 1px solid #b5b5b5;
}

.spin input {
  flex: 1;
  width: 0;
  padding-left: 1px;
}

.spin i {
  width: 10px;
  display: grid;
  place-items: center;
  background: #e6e6e6;
  border-left: 1px solid #bbb;
}

.spin i::before,
.spin i::after {
  content: "";
  border: 2px solid transparent;
}

.spin i::before {
  border-top: 0;
  border-bottom-color: #111;
}

.spin i::after {
  border-bottom: 0;
  border-top-color: #111;
}

.rest {
  flex: 1;
  border-top: 1px solid #e3e3e3;
}

.tabs {
  flex: 1;
  display: flex;
  flex-direction: column;
  align-items: center;
  gap: 3px;
  padding-top: 1px;
}

.tabs button {
  width: 20px;
  height: 20px;
  display: grid;
  place-items: center;
}

.tabs button.active {
  border: 1px solid #bbb;
  margin-top: 2px;
}

.tabs svg {
  width: 15px;
  height: 15px;
}

/* status bar */
.statusbar {
  display: flex;
  align-items: center;
  height: 14px;
  background: #f0f0f0;
  border-top: 1px solid #ddd;
}

.statusbar span {
  height: 11px;
  line-height: 11px;
  border-right: 1px solid #bbb;
  padding-left: 3px;
}

.statusbar .s-page {
  width: 234px;
  padding-left: 6px;
}

.s-style {
  width: 228px;
}

.s-lang {
  width: 277px;
  text-align: center;
}

.s-mode {
  width: 30px;
}

.s-sel {
  width: 23px;
}

.s-mod {
  width: 11px;
}

.s-sig {
  width: 19px;
}

.s-info {
  flex: 1;
}

.s-view {
  width: 52px;
}

.views {
  width: 42px;
  height: 10px;
}

.s-zoom {
  width: 93px;
  display: flex;
  align-items: center;
  gap: 2px;
}

.s-zoom svg {
  width: 8px;
  height: 8px;
}

.s-zoom input {
  appearance: none;
  width: 67px;
  height: 9px;
  background:
    linear-gradient(#888, #888) 20px center / 1px 7px no-repeat,
    linear-gradient(#999, #999) center / 100% 1px no-repeat;
}

.s-zoom input::-webkit-slider-thumb {
  appearance: none;
  width: 6px;
  height: 6px;
  border-radius: 50%;
  background: #4b7f9f;
  border: 1px solid #2d5878;
}

.statusbar .s-percent {
  width: 31px;
  border-right: 0;
}

/* taskbar */
.taskbar {
  display: flex;
  height: 27px;
  background: #04060a;
  color: #fff;
}

.start, .task {
  width: 32px;
  display: grid;
  place-items: center;
}

.start svg {
  width: 12px;
  height: 12px;
}

.cortana {
  width: 229px;
  display: flex;
  align-items: center;
  gap: 7px;
  padding: 0 8px 0 6px;
  background: #f2f2f2;
  color: #444;
}

.cortana svg {
  width: 14px;
  height: 14px;
}

.cortana input {
  flex: 1;
  font-size: 10px;
}

.cortana ::placeholder {
  color: #555;
}

.cortana .mic {
  width: 10px;
  height: 12px;
}

.task {
  width: 33px;
  border-bottom: 2px solid transparent;
  padding-top: 2px;
}

.task svg {
  width: 15px;
  height: 15px;
}

.current {
  background: #33363c;
  border-bottom-color: #76b9ed;
}

.tray {
  margin-left: auto;
  display: flex;
  align-items: center;
  gap: 4px;
}

.tray > svg {
  width: 12px;
  height: 12px;
  fill: none;
  stroke: #fff;
  stroke-width: .8;
}

.tray .people {
  margin-right: 7px;
}

.tray time {
  display: flex;
  flex-direction: column;
  align-items: center;
  width: 40px;
}

.notes {
  position: relative;
  width: 34px;
  height: 24px;
  padding-left: 6px;
  display: grid;
  align-items: center;
}

.notes svg {
  width: 12px;
  height: 12px;
}

.notes b {
  position: absolute;
  right: 11px;
  bottom: 2px;
  width: 11px;
  height: 11px;
  border-radius: 50%;
  background: #555;
  font-weight: normal;
  line-height: 11px;
}
```

FILE: rulers.js
```js
// one centimetre on screen at 100 %
const CM = 25.2;
const NS = "http://www.w3.org/2000/svg";

function add(parent, name, attrs, text) {
  const el = document.createElementNS(NS, name);
  Object.keys(attrs).forEach((key) => el.setAttribute(key, attrs[key]));
  if (text) el.textContent = text;
  parent.appendChild(el);
  return el;
}

// quarter marks and numbers counted from the margin
function scale(parent, zero, length, vertical) {
  const first = -Math.floor(zero / CM * 4);
  for (let i = first; zero + i * CM / 4 < length - 3; i++) {
    const pos = Math.round(zero + i * CM / 4);
    if (pos < 4 || i === 0) continue;
    if (i % 4 === 0) {
      const attrs = vertical
        ? { transform: `translate(11 ${pos}) rotate(-90)`, "text-anchor": "middle" }
        : { x: pos, y: 10, "text-anchor": "middle" };
      add(parent, "text", attrs, String(Math.abs(i / 4)));
    } else {
      const size = i % 2 === 0 ? 3 : 1;
      add(parent, "rect", vertical
        ? { x: 8 - (size + 1) / 2, y: pos, width: size, height: 1 }
        : { x: pos, y: 7 - (size + 1) / 2, width: 1, height: size });
    }
  }
}

const h = document.getElementById("hscale");
add(h, "rect", { x: 0, y: 0, width: 530, height: 13, fill: "#fff" });
add(h, "rect", { x: 0.5, y: 0.5, width: 50, height: 11, fill: "#ededed", stroke: "#aaa" });
add(h, "rect", { x: 479.5, y: 0.5, width: 50, height: 11, fill: "#ededed", stroke: "#aaa" });
const hg = add(h, "g", { fill: "#444", "font-size": 8 });
scale(hg, 51, 530, false);
for (let x = 51 + CM * 1.25; x < 479; x += CM * 1.25) {
  add(h, "path", { d: `M${Math.round(x) - 1.5} 11.5h4M${Math.round(x) + 0.5} 9v3`, stroke: "#333" });
}
add(h, "path", { d: "M47.5 .5h7v2l-3 3.500 3 3.500v2.500h-7V9.500l3-3.500-3-3.500z", fill: "#f4f4f4", stroke: "#888" });
add(h, "path", { d: "M479.500 6l3 3.500v2.500h-7V9.500z", fill: "#ddd", stroke: "#888" });

const v = document.getElementById("vscale");
add(v, "rect", { x: 0, y: 50, width: 13, height: 484, fill: "#fff" });
add(v, "rect", { x: 0.5, y: 0.5, width: 12, height: 50, fill: "#ededed", stroke: "#aaa" });
const vg = add(v, "g", { fill: "#444", "font-size": 8 });
scale(vg, 50, 537, true);
```
